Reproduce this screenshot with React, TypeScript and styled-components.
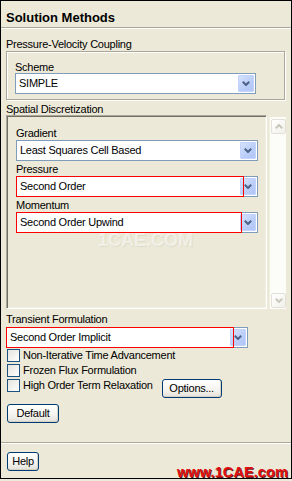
import React from "react";
import styled, { createGlobalStyle } from "styled-components";

const GlobalStyle = createGlobalStyle`
  html, body { margin: 0; padding: 0; background: #ECE9D8; }
  body { font-family: "Liberation Sans", Arial, sans-serif; font-size: 11px; letter-spacing: -0.25px; color: #000; }
  * { box-sizing: border-box; }
`;

const Panel = styled.div`
  position: relative;
  width: 292px;
  height: 479px;
  border: 1px solid #000;
  background: #ECE9D8;
  display: flex;
  flex-direction: column;
  overflow: hidden;
`;

const Title = styled.div`
  padding: 9px 5px 1px;
  height: 26px;
  line-height: 16px;
  font-size: 13px;
  font-weight: bold;
  letter-spacing: 0;
`;

const Etched = styled.div`
  height: 2px;
  border-top: 1px solid #ACA899;
  border-bottom: 1px solid #FFFFFF;
`;

const Body = styled.div`
  flex: 1;
  padding: 0 5px;
  display: flex;
  flex-direction: column;
`;

const Label = styled.div<{ $mt?: number; $lh?: number }>`
  margin-top: ${(p) => p.$mt ?? 0}px;
  line-height: ${(p) => p.$lh ?? 13}px;
  height: ${(p) => p.$lh ?? 13}px;
  white-space: nowrap;
`;

const GroupBox = styled.div`
  margin-right: 1px;
  border: 1px solid #ACA899;
  box-shadow: inset 1px 1px 0 #FFFFFF, 1px 1px 0 #FFFFFF;
  padding: 9px 8px 5px;
  display: flex;
  flex-direction: column;
`;

const ScrollRow = styled.div`
  display: flex;
  gap: 2px;
  height: 194px;
`;

const Pane = styled.div`
  flex: 1;
  border-style: solid;
  border-width: 1px;
  border-color: #ACA899 #FFFFFF #FFFFFF #ACA899;
  box-shadow: inset 1px 1px 0 #716F64, inset -1px -1px 0 #F1EFE2;
  padding: 11px 8px 0 9px;
  display: flex;
  flex-direction: column;
`;

const Scrollbar = styled.div`
  width: 17px;
  margin-top: 2px;
  background: #FCFCF9;
  border-left: 1px solid #F1EFE2;
  padding: 2px 1px 1px 1px;
  display: flex;
  flex-direction: column;
  justify-content: space-between;
`;

const ScrollBtn = styled.div`
  width: 15px;
  height: 15px;
  border: 1px solid #E3E1D7;
  border-radius: 2px;
  background: linear-gradient(135deg, #FFFFFF, #F1F0EA);
  display: flex;
  align-items: center;
  justify-content: center;
`;

const ComboBox = styled.div<{ $w: number; $mt?: number }>`
  position: relative;
  width: ${(p) => p.$w}px;
  height: 21px;
  margin-top: ${(p) => p.$mt ?? 0}px;
  border: 1px solid #7F9DB9;
  background: #FFFFFF;
  padding: 1px;
  display: flex;
  align-items: stretch;
`;

const ComboText = styled.div`
  flex: 1;
  padding-left: 2px;
  line-height: 17px;
  white-space: nowrap;
`;

const DropBtn = styled.div`
  width: 16px;
  border: 1px solid #C3D3FD;
  border-radius: 1px;
  background: linear-gradient(135deg, #D6E2FD 0%, #BACDF9 60%, #B1C6F6 100%);
  display: flex;
  align-items: center;
  justify-content: center;
`;

const Highlight = styled.div<{ $w: number }>`
  position: absolute;
  top: -1px;
  left: -1px;
  bottom: -1px;
  width: ${(p) => p.$w}px;
  border: 1px solid #FF0000;
  pointer-events: none;
`;

const CheckList = styled.div`
  display: flex;
  flex-direction: column;
  padding-left: 1px;
`;

const CheckRow = styled.div`
  display: flex;
  align-items: flex-start;
  height: 15px;
`;

const CheckBox = styled.div`
  width: 13px;
  height: 13px;
  margin-top: 1px;
  border: 1px solid #1C5180;
  background: linear-gradient(135deg, #E4E3DC, #FFFFFF);
  flex: none;
`;

const CheckText = styled.div`
  margin-left: 3px;
  line-height: 15px;
  white-space: nowrap;
`;

const XPButton = styled.div<{ $w: number; $ml?: number; $mt?: number }>`
  width: ${(p) => p.$w}px;
  height: 19px;
  margin-left: ${(p) => p.$ml ?? 0}px;
  margin-top: ${(p) => p.$mt ?? 0}px;
  border: 1px solid #003C74;
  border-radius: 3px;
  background: linear-gradient(180deg, #FFFFFF 0%, #F4F3EE 60%, #E3E1D8 100%);
  box-shadow: inset -1px -1px 0 #D6D0C5;
  display: flex;
  align-items: center;
  justify-content: center;
  line-height: 17px;
  flex: none;
`;

const Footer = styled.div`
  height: 34px;
  padding: 8px 6px 0;
`;

const WaterMid = styled.div`
  position: absolute;
  left: 97px;
  top: 229px;
  font-size: 18px;
  font-weight: bold;
  letter-spacing: 0;
  color: rgba(255, 255, 255, 0.5);
  text-shadow: 1px 1px 1px rgba(120, 110, 90, 0.1);
  pointer-events: none;
`;

const WaterBottom = styled.div`
  position: absolute;
  right: 3px;
  bottom: -2px;
  font-size: 14.5px;
  font-weight: bold;
  color: #E01010;
  text-shadow: 1px 1px 0 #6A1A1A;
  pointer-events: none;
  letter-spacing: 0.1px;
`;

const Chevron: React.FC<{ color: string; up?: boolean }> = ({ color, up }) => (
  <svg width="8" height="5" viewBox="0 0 8 5">
    <polyline
      points={up ? "0.8,4.2 4,1 7.2,4.2" : "0.8,0.8 4,4 7.2,0.8"}
      fill="none"
      stroke={color}
      strokeWidth="2"
    />
  </svg>
);

const Combo: React.FC<{ value: string; w: number; mt?: number; redW?: number }> = ({ value, w, mt, redW }) => (
  <ComboBox $w={w} $mt={mt}>
    <ComboText>{value}</ComboText>
    <DropBtn>
      <Chevron color="#4D6185" />
    </DropBtn>
    {redW ? <Highlight $w={redW} /> : null}
  </ComboBox>
);

const Check: React.FC<{ label: string; children?: React.ReactNode }> = ({ label, children }) => (
  <CheckRow>
    <CheckBox />
    <CheckText>{label}</CheckText>
    {children}
  </CheckRow>
);

export default function App() {
  return (
    <>
      <GlobalStyle />
      <Panel>
        <Title>Solution Methods</Title>
        <Etched />
        <Body>
          <Label $mt={9}>Pressure-Velocity Coupling</Label>
          <GroupBox>
            <Label $lh={12}>Scheme</Label>
            <Combo value="SIMPLE" w={241} />
          </GroupBox>
          <Label $mt={4} $lh={11}>Spatial Discretization</Label>
          <ScrollRow>
            <Pane>
              <Label>Gradient</Label>
              <Combo value="Least Squares Cell Based" w={242} />
              <Label $mt={2}>Pressure</Label>
              <Combo value="Second Order" w={242} redW={228} />
              <Label $mt={2}>Momentum</Label>
              <Combo value="Second Order Upwind" w={242} redW={226} />
            </Pane>
            <Scrollbar>
              <ScrollBtn>
                <Chevron color="#C9C7BA" up />
              </ScrollBtn>
              <ScrollBtn>
                <Chevron color="#C9C7BA" />
              </ScrollBtn>
            </Scrollbar>
          </ScrollRow>
          <Label $mt={4}>Transient Formulation</Label>
          <Combo value="Second Order Implicit" w={242} mt={1} redW={228} />
          <CheckList>
            <Check label="Non-Iterative Time Advancement" />
            <Check label="Frozen Flux Formulation" />
            <Check label="High Order Term Relaxation">
              <XPButton $w={60} $ml={9} $mt={1}>Options...</XPButton>
            </Check>
          </CheckList>
          <XPButton $w={52} $ml={1} $mt={11}>Default</XPButton>
        </Body>
        <Etched />
        <Footer>
          <XPButton $w={32}>Help</XPButton>
        </Footer>
        <WaterMid>1CAE.COM</WaterMid>
        <WaterBottom>www.1CAE.com</WaterBottom>
      </Panel>
    </>
  );
}
